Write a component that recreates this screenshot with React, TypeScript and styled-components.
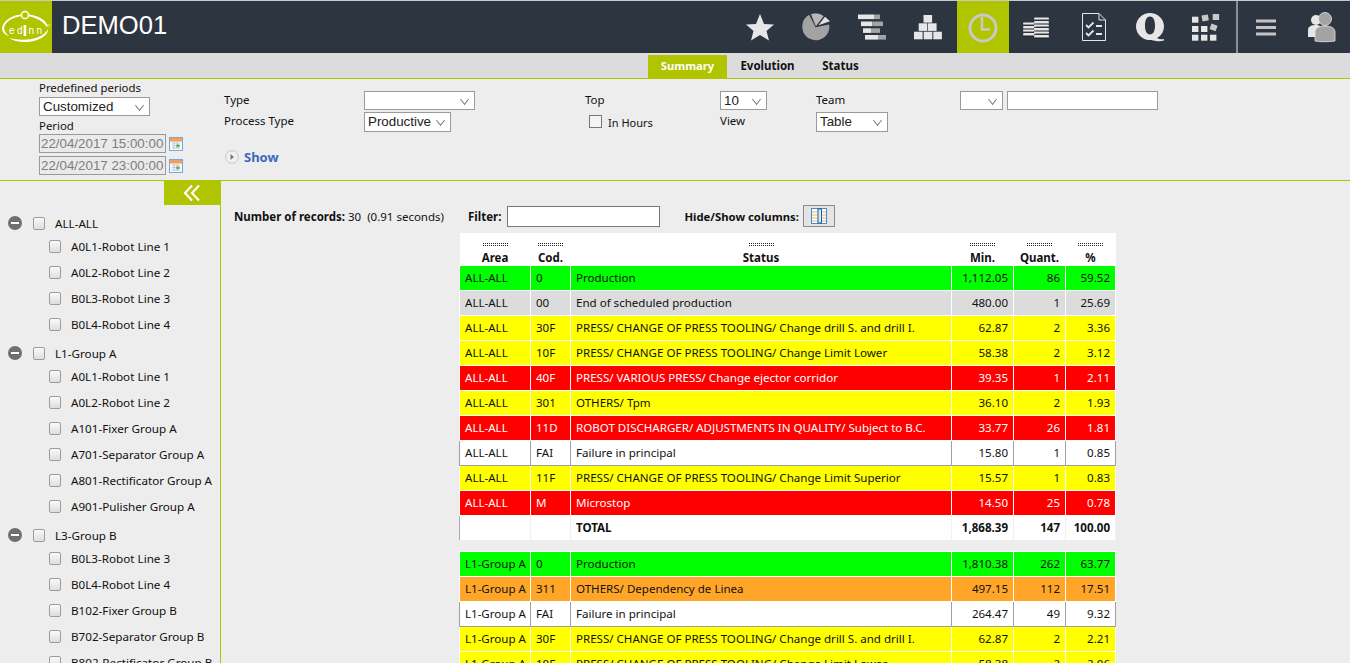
import React from "react";
import styled, { createGlobalStyle } from "styled-components";

const Global = createGlobalStyle`
  html, body { margin: 0; padding: 0; height: 663px; overflow: hidden; background: #ededed; }
  body { font-family: "Noto Sans", "DejaVu Sans", sans-serif; font-size: 11.5px; color: #111; }
  * { box-sizing: border-box; }
`;

const Page = styled.div`
  width: 1350px;
  height: 663px;
  overflow: hidden;
  display: flex;
  flex-direction: column;
  background: #ededed;
`;

const Header = styled.header`
  height: 53px;
  flex: none;
  border-top: 1px solid #c9c9c9;
  background: #2d3540;
  display: flex;
  align-items: stretch;
`;
const LogoBox = styled.div`
  width: 52px;
  background: #b0c400;
  flex: none;
`;
const Title = styled.h1`
  margin: 0 0 0 10px;
  font: 400 25.6px/48px "Liberation Sans", Arial, sans-serif;
  color: #fff;
`;
const Nav = styled.nav`
  margin-left: auto;
  display: flex;
  align-items: stretch;
`;
const NavGroup = styled.div<{ $left?: number }>`
  display: flex;
  gap: 6px;
  margin-left: ${(p) => p.$left ?? 0}px;
`;
const NavItem = styled.div`
  width: 50px;
  height: 52px;
`;
const ActiveItem = styled.div`
  width: 52px;
  height: 52px;
  margin-left: 4px;
  background: #b0c400;
`;
const NavTail = styled.div`
  display: flex;
  gap: 6px;
  margin-left: 5px;
  padding: 0 3px;
  border-left: 2px solid #8f8f8f;
`;

const Tabs = styled.div`
  height: 26px;
  flex: none;
  background: #dcdcdc;
  border-bottom: 1px solid #b0c400;
  display: flex;
  align-items: flex-end;
  padding-left: 648px;
`;
const Tab = styled.div<{ $active?: boolean; $w: number }>`
  width: ${(p) => p.$w}px;
  height: 23px;
  background: ${(p) => (p.$active ? "#b0c400" : "transparent")};
  color: ${(p) => (p.$active ? "#fff" : "#111")};
  font-weight: 700;
  font-size: ${(p) => (p.$active ? 11.2 : 11.5)}px;
  line-height: 22px;
  text-align: center;
`;

const Filters = styled.section`
  height: 102px;
  flex: none;
  border-bottom: 1px solid #b0c400;
  display: flex;
  padding-left: 39px;
`;
const PeriodCol = styled.div`
  width: 185px;
  padding-top: 1px;
  display: flex;
  flex-direction: column;
  align-items: flex-start;
`;
const PeriodLabel = styled.label`
  font-size: 11.4px;
  line-height: 16px;
  display: block;
`;
const PeriodGap = styled.div`
  height: 2px;
`;
const PeriodSelectRow = styled.div`
  margin-top: 1px;
`;
const DateRow = styled.div`
  display: flex;
  align-items: center;
  gap: 3px;
  margin-bottom: 3px;
`;
const DateInput = styled.div`
  width: 127px;
  height: 19px;
  border: 1px solid #9a9a9a;
  background: #eaeaea;
  color: #7d7d7d;
  font: 13.33px/17px "Liberation Sans", Arial, sans-serif;
  padding-left: 1px;
  white-space: nowrap;
  overflow: hidden;
`;
const FieldGrid = styled.div`
  display: grid;
  grid-template-columns: 140px 221px 135px 96px 144px 1fr;
  grid-template-rows: 21px 21px 36px;
  padding-top: 11px;
  align-items: center;
  flex: 1;
`;
const FieldLabel = styled.span`
  font-size: 11.5px;
  line-height: 19px;
  margin-top: -2px;
`;
const Select = styled.div<{ $w: number; $h?: number }>`
  width: ${(p) => p.$w}px;
  height: ${(p) => p.$h ?? 19}px;
  border: 1px solid #9a9a9a;
  background: #fff;
  font: 13.33px/${(p) => (p.$h ?? 19) - 2}px "Liberation Sans", Arial, sans-serif;
  padding-left: 3px;
  position: relative;
  color: #222;
  &::after {
    content: "";
    position: absolute;
    right: 6px;
    top: 4px;
    width: 6px;
    height: 6px;
    border-right: 1px solid #777;
    border-bottom: 1px solid #777;
    transform: rotate(45deg) skew(6deg, 6deg);
  }
`;
const TextBox = styled.div<{ $w: number }>`
  width: ${(p) => p.$w}px;
  height: 19px;
  border: 1px solid #9a9a9a;
  background: #fff;
`;
const TeamCell = styled.div`
  display: flex;
  gap: 4px;
`;
const InHours = styled.div`
  display: flex;
  align-items: center;
  gap: 6px;
  padding: 2px 0 0 4px;
  font-size: 11px;
`;
const PlainCheck = styled.span`
  width: 13px;
  height: 13px;
  border: 1px solid #777;
  background: #f4f4f4;
  display: inline-block;
  margin-top: -2px;
`;
const ShowCell = styled.div`
  grid-column: 1 / 3;
  display: flex;
  align-items: center;
  gap: 5px;
  padding-top: 14px;
  margin-left: 1px;
  color: #3b69b8;
  font-weight: 700;
  font-size: 13px;
`;

const Body = styled.div`
  flex: 1;
  min-height: 0;
  display: flex;
`;
const Sidebar = styled.aside`
  width: 221px;
  flex: none;
  border-right: 1px solid #b0c400;
  overflow: hidden;
`;
const Collapse = styled.div`
  margin-left: 164px;
  width: 56px;
  height: 24px;
  background: #b0c400;
  display: flex;
  align-items: center;
  justify-content: center;
`;
const Tree = styled.ul`
  list-style: none;
  margin: 0;
  padding: 5px 0 0 8px;
`;
const GroupRow = styled.li`
  height: 26px;
  margin-top: 3px;
  display: flex;
  align-items: center;
  font-size: 11.67px;
  &:first-child { margin-top: 0; }
`;
const ChildRow = styled.li<{ $first?: boolean }>`
  height: 26px;
  margin-top: ${(p) => (p.$first ? -3 : 0)}px;
  padding-left: 41px;
  display: flex;
  align-items: center;
  font-size: 11.67px;
  white-space: nowrap;
`;
const TreeCheck = styled.span`
  width: 12px;
  height: 13px;
  flex: none;
  margin-right: 10px;
  border: 1px solid #9c9c9c;
  border-radius: 2px;
  background: linear-gradient(#fafafa, #dedede);
`;
const Minus = styled.span`
  width: 14px;
  height: 14px;
  flex: none;
  margin-right: 11px;
  border-radius: 50%;
  background: #6f6f6f;
  display: flex;
  align-items: center;
  justify-content: center;
  &::before {
    content: "";
    width: 8px;
    height: 2px;
    background: #fff;
  }
`;

const Content = styled.main`
  flex: 1;
  min-width: 0;
  padding: 24px 0 0 13px;
`;
const Toolbar = styled.div`
  height: 22px;
  display: flex;
  align-items: center;
  font-size: 11.5px;
  white-space: nowrap;
`;
const Strong = styled.b`
  font-weight: 700;
`;
const FilterLabel = styled.b`
  margin-left: 24px;
  margin-right: 6px;
  font-weight: 700;
`;
const FilterInput = styled.div`
  width: 153px;
  height: 21px;
  border: 1px solid #777;
  background: #fff;
`;
const ColumnsLabel = styled.b`
  margin-left: 24px;
  margin-right: 4px;
  font-size: 11.3px;
  font-weight: 700;
`;
const ColumnsButton = styled.div`
  width: 32px;
  height: 22px;
  border: 1px solid #8a8a8a;
  background: #e4e4e4;
  display: flex;
  align-items: center;
  justify-content: center;
`;
const Table = styled.table`
  margin: 6px 0 0 225px;
  width: 656px;
  border-collapse: collapse;
  table-layout: fixed;
  font-size: 11.55px;
`;
const Th = styled.th`
  height: 32px;
  background: #fff;
  padding: 9px 0 0;
  font-size: 11.5px;
  font-weight: 700;
  line-height: 12px;
  vertical-align: top;
  text-align: center;
`;
const Grip = styled.span`
  display: block;
  width: 27px;
  height: 5px;
  margin: 0 auto 5px;
  background:
    repeating-linear-gradient(0deg, #fff 0 1px, transparent 1px 2px),
    repeating-linear-gradient(90deg, #fff 0 1px, #222 1px 2px);
`;
const Palette: Record<string, { bg: string; fg: string; line: string }> = {
  green: { bg: "#00ff00", fg: "#111", line: "#fff" },
  grey: { bg: "#dcdcdc", fg: "#111", line: "#fff" },
  yellow: { bg: "#ffff00", fg: "#111", line: "#fff" },
  red: { bg: "#ff0000", fg: "#fff", line: "#fff" },
  white: { bg: "#fff", fg: "#111", line: "#a0a0a0" },
  orange: { bg: "#ffa629", fg: "#111", line: "#fff" },
};
const Tr = styled.tr<{ $tone: string }>`
  background: ${(p) => Palette[p.$tone].bg};
  color: ${(p) => Palette[p.$tone].fg};
`;
const Td = styled.td<{ $tone: string; $num?: boolean }>`
  height: 25px;
  padding: 0 5px;
  border: 1px solid ${(p) => Palette[p.$tone].line};
  text-align: ${(p) => (p.$num ? "right" : "left")};
  white-space: nowrap;
  overflow: hidden;
`;
const TotalTd = styled.td<{ $num?: boolean }>`
  height: 25px;
  padding: 0 5px;
  background: #fff;
  font-weight: 700;
  border: 1px solid #f0f0f0;
  border-left-color: #a8a8a8;
  text-align: ${(p) => (p.$num ? "right" : "left")};
`;
const Spacer = styled.td`
  height: 11px;
  padding: 0;
  background: #ededed;
`;

const G = "#e6e6e6";
const M = "#a3a3a3";
const NAVY = "#2d3540";

const LogoIcon = () => (
  <svg width="52" height="52" viewBox="0 0 52 52" aria-label="ednn logo">
    <path fill="#fff" d="M2 27 C3 20 12 14 21 13.5 L21.5 15 C13 16.5 6 20 4.2 26 C3.8 29 5 32 9 35 C5 34 2 31 2 27 Z" />
    <path fill="#fff" d="M29 13.5 C38 14.5 46.5 19 47.5 25.5 L46.2 25.5 C44 21 37 17 29 15.3 Z" />
    <path fill="#fff" d="M48 28 C48.5 35 37 41 25 41 C18 41 13 39.5 9 37 C15 38.5 21 39 27 38.5 C37 38 45 34 48 28 Z" />
    <circle cx="25" cy="14" r="3.6" fill="#b0c400" stroke="#fff" strokeWidth="1.5" />
    <text x="9" y="32.5" fontFamily="Liberation Sans, sans-serif" fontSize="10" fill="#fff" letterSpacing="2.4">ed</text>
    <rect x="23.6" y="24" width="2.6" height="11" fill="#fff" />
    <text x="28.5" y="32.5" fontFamily="Liberation Sans, sans-serif" fontSize="10" fill="#fff" letterSpacing="2.4">nn</text>
    <circle cx="48.5" cy="24.5" r="1.3" fill="none" stroke="#fff" strokeWidth="0.5" />
  </svg>
);
const Star = () => (
  <svg width="50" height="52" viewBox="0 0 50 52">
    <polygon fill={G} points="25,13 29,23 39,23.5 31.5,30 34,39.5 25,34 16,39.5 18.5,30 11,23.5 21,23" />
  </svg>
);
const Pie = () => (
  <svg width="50" height="52" viewBox="0 0 50 52">
    <path fill={M} d="M24.7 26.3 L38.2 23.5 A13.6 13.6 0 1 1 18 13.8 Z" />
    <path fill="#b8b8b8" stroke={NAVY} strokeWidth="0.8" d="M24.7 26 L19.5 13 A14 14 0 0 1 33.2 15 Z" />
    <path fill="#e2e2e2" d="M27.5 24.2 L34 15.8 L39 20.2 Z" />
  </svg>
);
const Bars = () => {
  const rows = [
    [11, 27, 33, 13.5],
    [14, 25.3, 36, 20.5],
    [16, 24, 33, 27.3],
    [18, 31, 39, 34],
  ];
  return (
    <svg width="50" height="52" viewBox="0 0 50 52">
      {rows.map(([x, mid, end, y]) => (
        <g key={y}>
          <rect x={x} y={y} width={mid - x} height="4.6" fill={G} />
          <rect x={mid} y={y} width={end - mid} height="4.6" fill={M} />
        </g>
      ))}
    </svg>
  );
};
const Blocks = () => {
  const sq = [
    [20.5, 14],
    [15.7, 22.3],
    [25, 22.3],
    [11, 30.7],
    [20.7, 30.7],
    [30.3, 30.7],
  ];
  return (
    <svg width="50" height="52" viewBox="0 0 50 52">
      {sq.map(([x, y]) => (
        <rect key={`${x}-${y}`} x={x} y={y} width="8.6" height="7.6" fill={G} />
      ))}
    </svg>
  );
};
const Clock = () => (
  <svg width="52" height="52" viewBox="0 0 52 52">
    <circle cx="26" cy="27" r="13" fill="none" stroke="#c9c9c9" strokeWidth="3" />
    <path d="M25 16 V28.5 H33" fill="none" stroke="#c9c9c9" strokeWidth="2.6" />
  </svg>
);
const Coin = ({ x, y, w }: { x: number; y: number; w: number }) => (
  <g>
    <rect x={x} y={y} width={w} height="2" rx="1" fill={G} />
    <rect x={x} y={y + 2} width={w} height="0.9" fill="#9a9a9a" />
    <rect x={x} y={y + 2.9} width={w} height="0.6" fill="#15191f" />
  </g>
);
const Coins = () => (
  <svg width="50" height="52" viewBox="0 0 50 52">
    {[21.5, 25, 28.5, 32].map((y) => (
      <Coin key={`l${y}`} x={10} y={y} w={13} />
    ))}
    {[16.5, 20, 23.5, 27, 30.5, 34].map((y) => (
      <Coin key={`r${y}`} x={21} y={y} w={15} />
    ))}
  </svg>
);
const Checklist = () => (
  <svg width="50" height="52" viewBox="0 0 50 52">
    <path d="M13.5 12.5 H30 L36.5 19 V39.5 H13.5 Z M30 12.5 V19 H36.5" fill="none" stroke={G} strokeWidth="1" />
    <path d="M17 24 L19.5 26.5 L24.5 21.5 M17 32 L19.5 34.5 L24.5 29.5" fill="none" stroke={G} strokeWidth="1.8" />
    <path d="M27 25 H33 M27 33 H33" stroke={G} strokeWidth="1.8" />
  </svg>
);
const QIcon = () => (
  <svg width="50" height="52" viewBox="0 0 50 52">
    <path
      fill={G}
      fillRule="evenodd"
      d="M25 12 A14 13.5 0 0 1 39 25.5 A13.5 13.5 0 0 1 32 37 C34 38.2 36.5 38.6 39 38 L39 39.5 C34 41 30 40 26.5 39 A14 13.5 0 0 1 11 25.5 A14 13.5 0 0 1 25 12 Z M25 15.5 C21.5 15.5 20 19.5 20 24.5 C20 29.5 21.5 33.5 25 33.5 C28.5 33.5 30 29.5 30 24.5 C30 19.5 28.5 15.5 25 15.5 Z"
    />
  </svg>
);
const GridIcon = () => {
  const sq = [
    [11, 15.7],
    [11, 25],
    [20, 25],
    [11, 33.7],
    [20, 33.7],
    [29, 33.7],
  ];
  return (
    <svg width="50" height="52" viewBox="0 0 50 52">
      {sq.map(([x, y]) => (
        <rect key={`${x}-${y}`} x={x} y={y} width="6.4" height="6" fill={G} />
      ))}
      <rect x="21" y="14" width="6.4" height="6" fill="#c9c9c9" transform="rotate(-10 24 17)" />
      <rect x="31.7" y="13" width="6.4" height="6" fill="#c9c9c9" />
      <rect x="29.5" y="23.5" width="6.4" height="6" fill="#c9c9c9" transform="rotate(20 33 26)" />
    </svg>
  );
};
const Menu = () => (
  <svg width="50" height="52" viewBox="0 0 50 52">
    <path d="M15 20 H35 M15 26.5 H35 M15 33 H35" stroke="#c4c4c4" strokeWidth="3" />
  </svg>
);
const UserIcon = () => (
  <svg width="50" height="52" viewBox="0 0 50 52">
    <circle cx="19" cy="19" r="5" fill={G} />
    <path d="M11 36 V29 C11 25 15 24 19 24 C23 24 25 26 25 30 V36 Z" fill={G} />
    <circle cx="28" cy="18" r="6.5" fill={M} stroke={G} strokeWidth="0.8" />
    <path d="M18 40 V31 C18 27 22 25 28 25 C34 25 38 27 38 31 V40 C32 41 24 41 18 40 Z" fill={M} stroke={G} strokeWidth="0.8" />
  </svg>
);
const CalendarIcon = () => (
  <svg width="14" height="14" viewBox="0 0 14 14">
    <rect x="0.5" y="0.5" width="13" height="13" fill="#f4f7fb" stroke="#7aa7d8" />
    <rect x="1" y="1" width="12" height="3.5" fill="#f0a05a" />
    <path d="M3 6 H11 M3 8.5 H11 M3 11 H11 M5 5 V12 M8 5 V12" stroke="#b7c4cf" strokeWidth="0.8" />
    <rect x="7.5" y="7.5" width="3" height="2.6" fill="#5aaa4e" />
  </svg>
);
const ShowIcon = () => (
  <svg width="14" height="14" viewBox="0 0 14 14">
    <circle cx="7" cy="7" r="6.3" fill="#f1f1f1" stroke="#c4c4c4" />
    <path d="M5.5 4 L9 7 L5.5 10 Z" fill="#777" />
  </svg>
);
const DoubleChevron = () => (
  <svg width="18" height="18" viewBox="0 0 18 18">
    <path d="M9 1.5 L2 9 L9 16.5 M16 1.5 L9 9 L16 16.5" fill="none" stroke="#fff" strokeWidth="2.2" />
  </svg>
);
const ColumnsIcon = () => (
  <svg width="16" height="16" viewBox="0 0 16 16">
    <rect x="0.5" y="0.5" width="15" height="15" fill="#fff" stroke="#3f8fd0" />
    <path d="M1 4 H15 M1 7 H15 M1 10 H15 M1 13 H15" stroke="#f1b26d" strokeWidth="1" />
    <rect x="7" y="1" width="3.5" height="14" fill="#dbe9f6" stroke="#1f5f9f" strokeWidth="1" />
  </svg>
);

type Row = [string, string, string, string, string, string, string];
const firstRows: Row[] = [
  ["green", "ALL-ALL", "0", "Production", "1,112.05", "86", "59.52"],
  ["grey", "ALL-ALL", "00", "End of scheduled production", "480.00", "1", "25.69"],
  ["yellow", "ALL-ALL", "30F", "PRESS/ CHANGE OF PRESS TOOLING/ Change drill S. and drill I.", "62.87", "2", "3.36"],
  ["yellow", "ALL-ALL", "10F", "PRESS/ CHANGE OF PRESS TOOLING/ Change Limit Lower", "58.38", "2", "3.12"],
  ["red", "ALL-ALL", "40F", "PRESS/ VARIOUS PRESS/ Change ejector corridor", "39.35", "1", "2.11"],
  ["yellow", "ALL-ALL", "301", "OTHERS/ Tpm", "36.10", "2", "1.93"],
  ["red", "ALL-ALL", "11D", "ROBOT DISCHARGER/ ADJUSTMENTS IN QUALITY/ Subject to B.C.", "33.77", "26", "1.81"],
  ["white", "ALL-ALL", "FAI", "Failure in principal", "15.80", "1", "0.85"],
  ["yellow", "ALL-ALL", "11F", "PRESS/ CHANGE OF PRESS TOOLING/ Change Limit Superior", "15.57", "1", "0.83"],
  ["red", "ALL-ALL", "M", "Microstop", "14.50", "25", "0.78"],
];
const secondRows: Row[] = [
  ["green", "L1-Group A", "0", "Production", "1,810.38", "262", "63.77"],
  ["orange", "L1-Group A", "311", "OTHERS/ Dependency de Linea", "497.15", "112", "17.51"],
  ["white", "L1-Group A", "FAI", "Failure in principal", "264.47", "49", "9.32"],
  ["yellow", "L1-Group A", "30F", "PRESS/ CHANGE OF PRESS TOOLING/ Change drill S. and drill I.", "62.87", "2", "2.21"],
  ["yellow", "L1-Group A", "10F", "PRESS/ CHANGE OF PRESS TOOLING/ Change Limit Lower", "58.38", "2", "2.06"],
];
const tree: [string, string[]][] = [
  ["ALL-ALL", ["A0L1-Robot Line 1", "A0L2-Robot Line 2", "B0L3-Robot Line 3", "B0L4-Robot Line 4"]],
  ["L1-Group A", ["A0L1-Robot Line 1", "A0L2-Robot Line 2", "A101-Fixer Group A", "A701-Separator Group A", "A801-Rectificator Group A", "A901-Pulisher Group A"]],
  ["L3-Group B", ["B0L3-Robot Line 3", "B0L4-Robot Line 4", "B102-Fixer Group B", "B702-Separator Group B", "B802-Rectificator Group B"]],
];

const DataRow = ({ row }: { row: Row }) => {
  const [tone, area, cod, status, min, qty, pct] = row;
  return (
    <Tr $tone={tone}>
      <Td $tone={tone}>{area}</Td>
      <Td $tone={tone}>{cod}</Td>
      <Td $tone={tone}>{status}</Td>
      <Td $tone={tone} $num>{min}</Td>
      <Td $tone={tone} $num>{qty}</Td>
      <Td $tone={tone} $num>{pct}</Td>
    </Tr>
  );
};

export default function App() {
  return (
    <Page>
      <Global />
      <Header>
        <LogoBox><LogoIcon /></LogoBox>
        <Title>DEMO01</Title>
        <Nav>
          <NavGroup>
            <NavItem><Star /></NavItem>
            <NavItem><Pie /></NavItem>
            <NavItem><Bars /></NavItem>
            <NavItem><Blocks /></NavItem>
          </NavGroup>
          <ActiveItem><Clock /></ActiveItem>
          <NavGroup $left={4}>
            <NavItem><Coins /></NavItem>
            <NavItem><Checklist /></NavItem>
            <NavItem><QIcon /></NavItem>
            <NavItem><GridIcon /></NavItem>
          </NavGroup>
          <NavTail>
            <NavItem><Menu /></NavItem>
            <NavItem><UserIcon /></NavItem>
          </NavTail>
        </Nav>
      </Header>
      <Tabs>
        <Tab $active $w={79}>Summary</Tab>
        <Tab $w={81}>Evolution</Tab>
        <Tab $w={65}>Status</Tab>
      </Tabs>
      <Filters>
        <PeriodCol>
          <PeriodLabel>Predefined periods</PeriodLabel>
          <PeriodSelectRow><Select $w={111}>Customized</Select></PeriodSelectRow>
          <PeriodGap />
          <PeriodLabel>Period</PeriodLabel>
          <DateRow><DateInput>22/04/2017 15:00:00</DateInput><CalendarIcon /></DateRow>
          <DateRow><DateInput>22/04/2017 23:00:00</DateInput><CalendarIcon /></DateRow>
        </PeriodCol>
        <FieldGrid>
          <FieldLabel>Type</FieldLabel>
          <Select $w={111} />
          <FieldLabel>Top</FieldLabel>
          <Select $w={47}>10</Select>
          <FieldLabel>Team</FieldLabel>
          <TeamCell><Select $w={43} /><TextBox $w={151} /></TeamCell>
          <FieldLabel>Process Type</FieldLabel>
          <Select $w={87} $h={20}>Productive</Select>
          <InHours><PlainCheck />In Hours</InHours>
          <FieldLabel>View</FieldLabel>
          <Select $w={72} $h={20}>Table</Select>
          <span />
          <ShowCell><ShowIcon />Show</ShowCell>
        </FieldGrid>
      </Filters>
      <Body>
        <Sidebar>
          <Collapse><DoubleChevron /></Collapse>
          <Tree>
            {tree.map(([group, kids]) => (
              <React.Fragment key={group}>
                <GroupRow><Minus /><TreeCheck />{group}</GroupRow>
                {kids.map((k, i) => (
                  <ChildRow key={k} $first={i === 0}><TreeCheck />{k}</ChildRow>
                ))}
              </React.Fragment>
            ))}
          </Tree>
        </Sidebar>
        <Content>
          <Toolbar>
            <Strong>Number of records:</Strong>&nbsp;30&nbsp;&nbsp;(0.91 seconds)
            <FilterLabel>Filter:</FilterLabel>
            <FilterInput />
            <ColumnsLabel>Hide/Show columns:</ColumnsLabel>
            <ColumnsButton><ColumnsIcon /></ColumnsButton>
          </Toolbar>
          <Table>
            <colgroup>
              <col style={{ width: 71 }} />
              <col style={{ width: 40 }} />
              <col style={{ width: 381 }} />
              <col style={{ width: 62 }} />
              <col style={{ width: 52 }} />
              <col style={{ width: 50 }} />
            </colgroup>
            <thead>
              <tr>
                {["Area", "Cod.", "Status", "Min.", "Quant.", "%"].map((h) => (
                  <Th key={h}><Grip />{h}</Th>
                ))}
              </tr>
            </thead>
            <tbody>
              {firstRows.map((r) => <DataRow key={r[2]} row={r} />)}
              <tr>
                <TotalTd />
                <TotalTd />
                <TotalTd>TOTAL</TotalTd>
                <TotalTd $num>1,868.39</TotalTd>
                <TotalTd $num>147</TotalTd>
                <TotalTd $num>100.00</TotalTd>
              </tr>
              <tr><Spacer colSpan={6} /></tr>
              {secondRows.map((r) => <DataRow key={r[2]} row={r} />)}
            </tbody>
          </Table>
        </Content>
      </Body>
    </Page>
  );
}
